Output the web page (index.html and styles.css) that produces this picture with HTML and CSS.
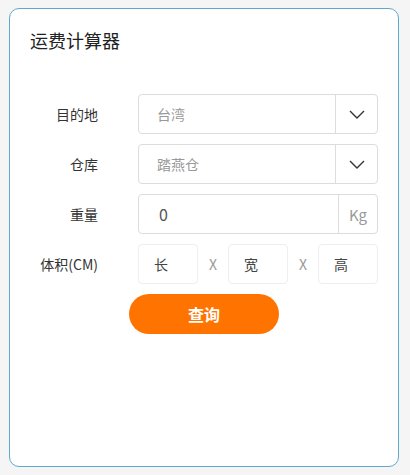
FILE: index.html
```html
<!DOCTYPE html>
<html lang="zh-CN">
<head>
<meta charset="utf-8">
<title>运费计算器</title>
<link rel="stylesheet" href="styles.css">
</head>
<body>
<div class="card">
  <h1 class="title">运费计算器</h1>
  <div class="form">
    <div class="row">
      <label class="label">目的地</label>
      <div class="field select">
        <span class="value placeholder">台湾</span>
        <span class="addon"><svg width="16" height="9" viewBox="0 0 16 9"><polyline points="1,1 8,8 15,1" fill="none" stroke="#333" stroke-width="1.4"/></svg></span>
      </div>
    </div>
    <div class="row">
      <label class="label">仓库</label>
      <div class="field select">
        <span class="value placeholder">踏燕仓</span>
        <span class="addon"><svg width="16" height="9" viewBox="0 0 16 9"><polyline points="1,1 8,8 15,1" fill="none" stroke="#333" stroke-width="1.4"/></svg></span>
      </div>
    </div>
    <div class="row">
      <label class="label">重量</label>
      <div class="field weight">
        <span class="value num">0</span>
        <span class="addon unit">Kg</span>
      </div>
    </div>
    <div class="row">
      <label class="label">体积(CM)</label>
      <div class="dims">
        <span class="dim">长</span>
        <span class="x">X</span>
        <span class="dim">宽</span>
        <span class="x">X</span>
        <span class="dim">高</span>
      </div>
    </div>
  </div>
  <div class="actions">
    <button class="btn">查询</button>
  </div>
</div>
</body>
</html>
```
FILE: styles.css
```css
* { box-sizing: border-box; }
html, body { margin: 0; padding: 0; }
body {
  background: #f5f5f5;
  font-family: "Noto Sans CJK SC", "Noto Sans", sans-serif;
  width: 410px;
  height: 475px;
  padding: 8px 11px 8px 9px;
}
.card {
  width: 390px;
  height: 459px;
  background: #fff;
  border: 1px solid #5ea9cd;
  border-radius: 10px;
  padding: 19px 20px 0 20px;
}
.title {
  margin: 0;
  font-size: 18px;
  line-height: 24px;
  font-weight: 400;
  color: #222;
}
.form {
  margin-top: 42px;
  display: flex;
  flex-direction: column;
  gap: 10px;
}
.row {
  display: flex;
  align-items: center;
  height: 40px;
  gap: 40px;
}
.label {
  width: 68px;
  text-align: right;
  font-size: 14px;
  color: #333;
  line-height: 20px;
}
.field {
  width: 240px;
  height: 40px;
  border: 1px solid #dcdcdc;
  border-radius: 4px;
  display: flex;
  align-items: center;
}
.value {
  flex: 1;
  padding-left: 18px;
  font-size: 14px;
  line-height: 20px;
}
.placeholder { color: #999; }
.num { color: #555; font-size: 16px; padding-left: 20px; }
.addon {
  height: 100%;
  border-left: 1px solid #dcdcdc;
  display: flex;
  align-items: center;
  justify-content: center;
}
.select .addon { width: 42px; }
.weight .addon { width: 39px; }
.unit { color: #999; font-size: 15px; }
.dims {
  display: flex;
  align-items: center;
  width: 240px;
}
.dim {
  width: 60px;
  height: 40px;
  border: 1px solid #eeeeee;
  border-radius: 4px;
  display: flex;
  align-items: center;
  padding-left: 15px;
  font-size: 14px;
  color: #444;
}
.x {
  width: 30px;
  text-align: center;
  font-size: 14px;
  color: #999;
}
.actions {
  display: flex;
  justify-content: center;
  margin-top: 10px;
}
.btn {
  width: 150px;
  height: 40px;
  border: none;
  border-radius: 20px;
  background: #ff7401;
  color: #fff;
  font-family: inherit;
  font-size: 16px;
  font-weight: 700;
  padding: 0;
}
```
